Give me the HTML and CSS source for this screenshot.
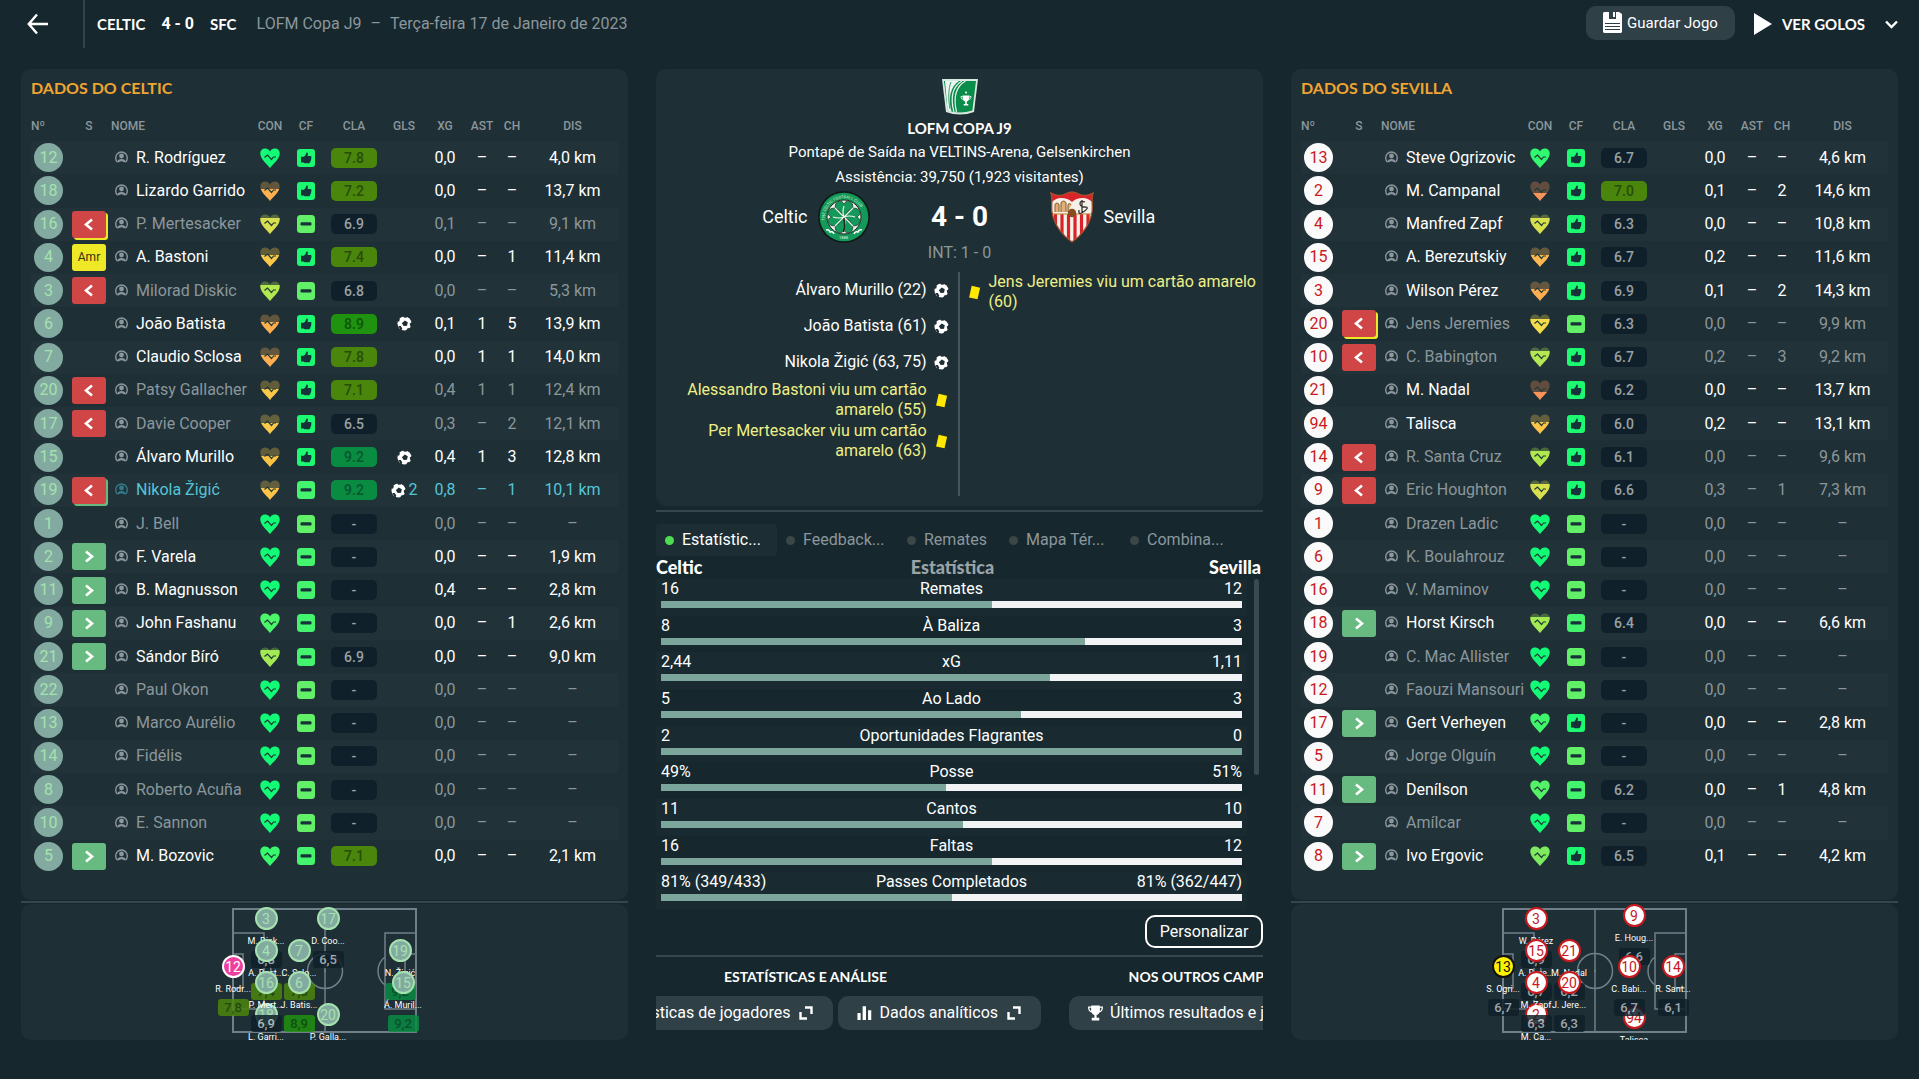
FILE: index.html
```html
<!DOCTYPE html>
<html lang="pt">
<head>
    <meta charset="UTF-8">
    <meta name="viewport" content="width=device-width, initial-scale=1.0">
    <title>Celtic 4 - 0 Sevilla</title>
    <link rel="stylesheet" href="styles.css">
</head>
<body>
    <svg class="sprite" aria-hidden="true">
        <symbol id="i-person" viewBox="0 0 13 14">
            <path d="M2.500 12A5.800 5.800 0 1 1 10.500 12" fill="none" stroke="currentColor" stroke-width="1.400"/>
            <circle cx="6.500" cy="6" r="2.400" fill="currentColor"/>
            <path d="M2.200 12.500C2.500 10 4 9 6.500 9s4 1 4.300 3.500L8.500 12c-.8-1-3.200-1-4 0z" fill="currentColor"/>
        </symbol>
        <symbol id="i-heart" viewBox="0 0 20 20">
            <path d="M10 20C8 16.500.3 11.500.3 5.200.3 2 2.500.4 5 .4c2.300 0 4 1.200 5 3.200 1-2 2.700-3.200 5-3.200 2.500 0 4.700 1.600 4.700 4.800C19.700 11.500 12 16.500 10 20z"/>
        </symbol>
        <symbol id="i-up" viewBox="0 0 18 18">
            <rect width="18" height="18" rx="3" fill="currentColor"/>
            <path d="M9.800 3.300c1.400.3 1.200 1.800.8 3.700h2.600c1.500 0 1.600 1.500.9 2 .5.600.3 1.400-.3 1.800.3.7 0 1.300-.6 1.600.2 1.200-.7 1.800-1.700 1.800H8.500c-1 0-1.500-.3-2-.7H4V7.800h2.800c1.600-1 2.200-2.600 3-4.500z" fill="#17323a"/>
        </symbol>
        <symbol id="i-flat" viewBox="0 0 18 18">
            <rect width="18" height="18" rx="3.500" fill="currentColor"/>
            <rect x="3.500" y="7.300" width="11" height="3.200" rx="1.200" fill="#17323a"/>
        </symbol>
        <symbol id="i-ball" viewBox="0 0 16 16">
            <circle cx="8" cy="8" r="7.500" fill="#fff"/>
            <path d="M8.300 4.700l3.200 2-.8 3.600-3.600.4-1.900-3zM0 5.600l2.200.6.8-2.500L2.200 1.800zM6.500 0l1 1.800 3-.1L12 0zM16 6.500l-2.400 1.600.6 3 1.800-.2zM10 16l.6-2.400 2.800-1 .8 1.800zM1.500 10.700l2.600 0 1.600 3-1.500 2z" fill="#1e2f35"/>
        </symbol>
        <symbol id="i-card" viewBox="0 0 14 16">
            <path d="M4 .8l9 2-2.800 12.500-9-2z" fill="#ffe900"/>
        </symbol>
        <symbol id="i-open" viewBox="0 0 14 14">
            <path d="M6 1.500h6.500V8M8 12.500H1.500V6" fill="none" stroke="currentColor" stroke-width="2.400"/>
        </symbol>
        <symbol id="i-bars" viewBox="0 0 16 16">
            <path d="M.5 8h3.400v7.500H.5zM6 .8h3.600v14.700H6zM11.800 5h3.400v10.500h-3.400z" fill="currentColor"/>
        </symbol>
        <symbol id="i-cup" viewBox="0 0 14 14">
            <path d="M3 0h8v1h3c0 3.500-1 5-3.300 5.500C10 7.800 9 8.500 8 8.800V11.500h2.500V14h-7v-2.500H6V8.800C5 8.500 4 7.800 3.300 6.500 1 6 0 4.500 0 1h3zM1.300 2.200C1.400 4 1.900 4.800 2.900 5.100V2.200zM12.700 2.200H11.100v2.900c1-.3 1.500-1.100 1.600-2.900z" fill="currentColor"/>
        </symbol>
        <symbol id="i-pitch" viewBox="0 0 185 125">
            <g fill="none" stroke="#70808a" stroke-width="2">
                <rect x="1" y="1" width="183" height="123"/>
                <path d="M1 25h31v76H1M1 46h10v34H1M184 25h-31v76h31M184 46h-11v34h11M93 1v123" stroke-width="1.500"/>
                <circle cx="93" cy="63" r="17.500" stroke-width="1.500"/>
                <path d="M153 49a17.500 17.500 0 0 0 0 28M32 49a17.500 17.500 0 0 1 0 28" stroke-width="1.500"/>
            </g>
            <circle cx="93" cy="63" r="1" fill="#70808a"/>
        </symbol>
    </svg>

    <header class="topbar">
        <button class="back" aria-label="Voltar">
            <svg width="22" height="22" viewBox="0 0 22 22"><path d="M21 11H2M10 1.500L1.800 11l8.200 9.500" fill="none" stroke="#fff" stroke-width="2.400"/></svg>
        </button>
        <div class="topbar-score">
            <b>CELTIC</b><b class="num">4 - 0</b><b>SFC</b>
        </div>
        <div class="topbar-info"><span>LOFM Copa J9</span><span>–</span><span>Terça-feira 17 de Janeiro de 2023</span></div>
        <button class="button save">
            <svg width="19" height="21" viewBox="0 0 19 21"><path d="M1 0h5v7h7V0h3l3 2v18l-1 1H1l-1-1V1z" fill="#fff"/><path d="M10 0h2v5h-2z" fill="#fff"/><path d="M2 11.500h15M2 14.500h15M2 17.500h15" stroke="#2d3f46" stroke-width="1.200"/></svg>
            Guardar Jogo
        </button>
        <button class="goals">
            <svg width="18" height="22" viewBox="0 0 18 22"><path d="M0 0l18 11L0 22z" fill="#fff"/></svg>
            <b>VER GOLOS</b>
            <svg width="13" height="9" viewBox="0 0 13 9"><path d="M1 1.500l5.500 5.500L12 1.500" fill="none" stroke="#fff" stroke-width="2.400"/></svg>
        </button>
    </header>

    <main class="columns">
        <section class="team" id="celtic"></section>

        <section class="match">
            <div class="panel summary">
                <svg class="badge" width="36" height="36" viewBox="0 0 36 36">
                    <path d="M0 0h36l-4 33q-14 5-28 0z" fill="#d9e8e0"/>
                    <path d="M2 2h32l-3.600 29.500q-12.400 4-24.800 0z" fill="#0a8c4a"/>
                    <path d="M3 2h14C8 8 6 20 9.500 32.500l-4-1z" fill="#eef6f1"/>
                    <path d="M20 2C10 8 8.500 20 12 33M23.500 2C13 8 11.500 20 14.500 33" fill="none" stroke="#eef6f1" stroke-width="1.200"/>
                    <path d="M9 3C6.500 9 6 20 8 30" fill="none" stroke="#0a8c4a" stroke-width=".8"/>
                    <path d="M20.500 16.500h7c0 4-1 5.500-2.700 6V25h1.500v1.500h-4.600V25h1.500v-2.500c-1.700-.5-2.700-2-2.700-6z" fill="#fff"/>
                    <path d="M20.500 17.500h-1.500c0 2 .8 3 2.300 3M27.500 17.500H29c0 2-.8 3-2.300 3" fill="none" stroke="#fff" stroke-width=".8"/>
                    <circle cx="24" cy="13.500" r="1" fill="#fff"/>
                </svg>
                <h1>LOFM COPA J9</h1>
                <p>Pontapé de Saída na VELTINS-Arena, Gelsenkirchen</p>
                <p>Assistência: 39,750 (1,923 visitantes)</p>
                <div class="scoreline">
                    <div class="side home">
                        <span>Celtic</span>
                        <svg width="52" height="52" viewBox="0 0 52 52">
                            <defs>
                                <path id="arc" d="M7.500 32A19.300 19.300 0 1 1 44.500 32"/>
                            </defs>
                            <circle cx="26" cy="26" r="26" fill="#101a1a"/>
                            <circle cx="26" cy="26" r="24.300" fill="#139a5a"/>
                            <circle cx="26" cy="26" r="17" fill="#f3f5ec" stroke="#222" stroke-width="1"/>
                            <text class="crest-text"><textPath href="#arc" startOffset="3">THE CELTIC FOOTBALL CLUB</textPath></text>
                            <text class="crest-text" x="21" y="48">1888</text>
                            <path d="M8 39q3-1 4 2 3-1 4 2M44 39q-3-1-4 2-3-1-4 2" fill="none" stroke="#fff" stroke-width="1.500"/>
                            <g fill="#139a5a" stroke="#16352a" stroke-width=".8">
                                <path id="leaf" d="M26 25.500C17 22 15 14 19.500 11c3-1.800 5.500-.2 6.500 2.200 1-2.400 3.500-4 6.500-2.200C37 14 35 22 26 25.500z"/>
                                <use href="#leaf" transform="rotate(90 26 26)"/>
                                <use href="#leaf" transform="rotate(180 26 26)"/>
                                <use href="#leaf" transform="rotate(270 26 26)"/>
                            </g>
                            <path d="M26 26q-2-5 0-11M26 26q2 5 0 11M26 26q5-2 11 0M26 26q-5 2-11 0M26 26l9-9M26 26l-9 9M26 26l-9-9M26 26l9 9" fill="none" stroke="#f3f5ec" stroke-width="1.100"/>
                            <path d="M26 27q1.500 7-.5 14" fill="none" stroke="#222" stroke-width="1.500"/>
                        </svg>
                    </div>
                    <strong>4 - 0</strong>
                    <div class="side">
                        <svg width="44" height="52" viewBox="0 0 44 52">
                            <defs>
                                <clipPath id="shield"><path d="M1 2q7 4 13 1.500Q19 1 22 1t8 2.500Q36 6 43 2c-2 6 0 12-1 19-2 13-11 24-20 30C13 45 4 34 2 21 1 14 3 8 1 2z"/></clipPath>
                            </defs>
                            <g clip-path="url(#shield)">
                                <rect width="44" height="52" fill="#f6f1e8"/>
                                <path d="M0 0h44v13q-5-6-11-6-7 0-11 4Q18 7 11 7 5 7 0 13z" fill="#d8232a"/>
                                <path d="M5.500 23v29M12 23v29M18.500 23v29M25 23v29M31.500 23v29M38 23v29" stroke="#d8232a" stroke-width="3.200"/>
                                <path d="M0 23h44" stroke="#b9842c" stroke-width="1.200"/>
                                <path d="M5 21v-7q2-4 4 0v7M11 21v-9q2.500-4 5 0v9M18 21v-7q1.500-3 3 0" fill="#e0b078" stroke="#9a6a3a" stroke-width="1.200"/>
                                <path d="M35 11q-5-2-5 1.500t5 3.500-1 4.500-5-1.500M32 9v13" fill="none" stroke="#333" stroke-width="1.300"/>
                                <circle cx="22" cy="22" r="4.200" fill="#8a4a22"/>
                            </g>
                            <path d="M1 2q7 4 13 1.500Q19 1 22 1t8 2.500Q36 6 43 2c-2 6 0 12-1 19-2 13-11 24-20 30C13 45 4 34 2 21 1 14 3 8 1 2z" fill="none" stroke="#a5502a" stroke-width="1.300"/>
                        </svg>
                        <span>Sevilla</span>
                    </div>
                </div>
                <div class="halftime">INT: 1 - 0</div>
                <div class="events">
                    <ul class="home">
                        <li><span>Álvaro Murillo (22)</span><svg><use href="#i-ball"/></svg></li>
                        <li><span>João Batista (61)</span><svg><use href="#i-ball"/></svg></li>
                        <li><span>Nikola Žigić (63, 75)</span><svg><use href="#i-ball"/></svg></li>
                        <li class="booked"><span>Alessandro Bastoni viu um cartão amarelo (55)</span><svg><use href="#i-card"/></svg></li>
                        <li class="booked"><span>Per Mertesacker viu um cartão amarelo (63)</span><svg><use href="#i-card"/></svg></li>
                    </ul>
                    <ul>
                        <li class="booked"><svg><use href="#i-card"/></svg><span>Jens Jeremies viu um cartão amarelo (60)</span></li>
                    </ul>
                </div>
            </div>
            <div class="rule"></div>

            <nav class="tabs">
                <button class="active">Estatístic...</button>
                <button>Feedback...</button>
                <button>Remates</button>
                <button>Mapa Tér...</button>
                <button>Combina...</button>
            </nav>
            <div class="stats-head"><b>Celtic</b><b>Estatística</b><b>Sevilla</b></div>
            <div class="stats-view">
                <div class="stats" id="stats"></div>
                <div class="scroll-thumb"></div>
            </div>
            <button class="customise">Personalizar</button>
            <div class="rule"></div>

            <div class="shortcuts" id="shortcuts">
                <div class="group">
                    <h2>ESTATÍSTICAS E ANÁLISE</h2>
                    <div class="group-buttons">
                        <button class="button"><svg><use href="#i-bars"/></svg>Estatísticas de jogadores<svg><use href="#i-open"/></svg></button>
                        <button class="button"><svg><use href="#i-bars"/></svg>Dados analíticos<svg><use href="#i-open"/></svg></button>
                    </div>
                </div>
                <div class="group">
                    <h2>NOS OUTROS CAMPOS</h2>
                    <div class="group-buttons">
                        <button class="button"><svg><use href="#i-cup"/></svg>Últimos resultados e jogos<svg><use href="#i-open"/></svg></button>
                    </div>
                </div>
            </div>
        </section>

        <section class="team" id="sevilla"></section>
    </main>

    <script src="script.js"></script>
</body>
</html>
```

FILE: styles.css
```css
* {
    box-sizing: border-box;
}

body {
    display: flex;
    flex-direction: column;
    height: 100vh;
    margin: 0;
    padding-bottom: 39px;
    background-color: #16272d;
    color: #fff;
    font: 16px/20px Roboto, sans-serif;
    overflow: hidden;
}

h1, h2, p, ul {
    margin: 0;
    padding: 0;
}

button {
    background: none;
    border: none;
    padding: 0;
    color: inherit;
    font: inherit;
    white-space: nowrap;
    cursor: pointer;
}

.sprite {
    display: none;
}

/* top bar */

.topbar {
    display: flex;
    align-items: center;
    flex: none;
    height: 48px;
    padding: 0 21px 0 0;
}

.back {
    width: 85px;
    height: 48px;
    padding: 0 0 0 27px;
    border-right: 2px solid #33444b;
    text-align: left;
}

.back svg,
.goals svg,
.save svg {
    display: block;
}

.topbar-score {
    display: flex;
    gap: 16px;
    margin-left: 12px;
    font-family: Lato, sans-serif;
}

.topbar-score b,
.goals b {
    font-size: 15px;
    font-weight: 700;
}

.topbar-score .num {
    font-family: Roboto, sans-serif;
    font-size: 16px;
}

.topbar-info {
    display: flex;
    gap: 9px;
    margin-left: 20px;
    color: #8b979c;
}

.button {
    display: flex;
    align-items: center;
    height: 34px;
    padding: 0 19px;
    border-radius: 10px;
    background: #2f4047;
}

.save {
    gap: 5px;
    margin: -3px 19px 0 auto;
    padding: 0 17px;
    font-size: 15px;
}

.goals {
    display: flex;
    align-items: center;
    gap: 10px;
    font-family: Lato, sans-serif;
}

.goals b {
    margin-right: 10px;
}

/* layout */

.columns {
    flex: 1;
    display: grid;
    grid-template-columns: repeat(3, minmax(0, 1fr));
    gap: 28px;
    min-height: 0;
    margin-top: 21px;
    padding: 0 21px;
}

.team,
.match {
    display: flex;
    flex-direction: column;
    min-height: 0;
}

.panel {
    background: #1e2f35;
    border-radius: 10px;
}

.rule {
    flex: none;
    height: 2px;
    background: #35464d;
}

/* player tables */

.squad {
    display: flex;
    flex-direction: column;
    flex: 1;
    min-height: 0;
    padding: 9px 10px 27px;
}

.squad h2 {
    margin-bottom: 12px;
    color: #f0a431;
    font: 700 16px/20px Lato, sans-serif;
}

.squad-table {
    flex: 1;
    min-height: 0;
}

table {
    width: 100%;
    height: 100%;
    border-collapse: collapse;
    table-layout: fixed;
}

th {
    height: 31px;
    padding: 0;
    color: #8b979c;
    font-size: 12px;
    font-weight: 500;
}

td {
    padding: 0;
    text-align: center;
    white-space: nowrap;
}

tbody tr:nth-child(odd) {
    background: #213239;
}

.c-no { width: 36px; }
.c-s { width: 44px; }
.c-con { width: 38px; }
.c-cf { width: 34px; }
.c-cla { width: 62px; }
.c-gls { width: 38px; }
.c-xg { width: 44px; }
.c-ast, .c-ch { width: 30px; }
.c-dis { width: 91px; }

th.c-no,
th.c-name {
    text-align: left;
}

td.c-name {
    padding-left: 4px;
    text-align: left;
}

.unused {
    color: #8b979c;
}

.mine {
    color: #55c5d6;
}

td svg {
    display: block;
    margin: 0 auto;
}

.person {
    display: inline-block;
    width: 13px;
    height: 14px;
    margin: 0 8px 0 0;
    color: #8b979c;
    vertical-align: -1px;
}

.mine .person {
    color: #347a88;
}

.shirt {
    display: flex;
    align-items: center;
    justify-content: center;
    width: 29px;
    height: 29px;
    margin-left: 3px;
    border-radius: 50%;
}

.shirt.celtic {
    background: #82aaa1;
    color: #a5e2ad;
}

.shirt.sevilla {
    background: #fafafa;
    color: #c8191f;
}

.sub {
    display: flex;
    align-items: center;
    justify-content: center;
    width: 34px;
    height: 27px;
    margin: 0 auto;
    border-radius: 3px;
    font-size: 12px;
}

.sub.off { background: #d04545; }
.sub.on { background: #68bb80; }
.sub.amr { background: #efe827; color: #33330c; }
.sub.off-amr { background: #d04545; box-shadow: 2px 2px 0 #efe827; }
.sub.off-goal { background: #d04545; box-shadow: 2px 2px 0 #68bb80; }

.rating {
    display: block;
    width: 46px;
    height: 20px;
    margin: 0 auto;
    border-radius: 5px;
    background: #10202a;
    color: #98a1a5;
    font-size: 14px;
    font-weight: 500;
}

.goal {
    display: flex;
    align-items: center;
    justify-content: center;
    gap: 3px;
}

.goal svg {
    width: 15px;
    height: 15px;
    margin: 0;
}

/* formation */

.team .rule {
    margin: 1px 0;
}

.formation {
    display: flex;
    justify-content: center;
    flex: none;
    height: 136px;
    padding-top: 4px;
    overflow: hidden;
}

.pitch {
    position: relative;
    width: 185px;
    height: 125px;
}

.pitch > svg {
    display: block;
    width: 185px;
    height: 125px;
}

.node {
    position: absolute;
    display: flex;
    flex-direction: column;
    align-items: center;
    width: 32px;
    margin: -12px 0 0 -16px;
}

.disc {
    display: flex;
    align-items: center;
    justify-content: center;
    width: 23px;
    height: 23px;
    border: 2px solid #a5e2ad;
    border-radius: 50%;
    background: #82aaa1;
    color: #a5e2ad;
    font-size: 14px;
}

.sevilla .disc {
    border-color: #c8191f;
    background: #fff;
    color: #c8191f;
}

.celtic .keeper {
    border-color: #fff;
    background: #ee3fa0;
    color: #fff;
}

.sevilla .keeper {
    border-color: #111;
    background: #fff000;
    color: #111;
}

.node .name {
    margin-top: 3px;
    font-size: 9px;
    line-height: 16px;
    white-space: nowrap;
}

.mark {
    width: 31px;
    height: 17px;
    margin-top: 2px;
    border-radius: 3px;
    background: #10202a;
    color: #b4bcc0;
    font-size: 13px;
    font-weight: 500;
    line-height: 17px;
    text-align: center;
    opacity: .85;
}

.good { background: #4a850c; color: #274d09; }
.great { background: #1f920f; color: #0d560a; }
.top { background: #0a8b42; color: #05572c; }

/* match summary */

.summary {
    display: flex;
    flex-direction: column;
    align-items: center;
    height: 437px;
    padding-top: 10px;
}

.badge {
    flex: none;
}

.summary h1 {
    margin: 3px 0 2px;
    font: 700 15px/20px Lato, sans-serif;
}

.summary p {
    font-size: 15px;
    line-height: 25px;
}

.scoreline {
    display: grid;
    grid-template-columns: 1fr 180px 1fr;
    align-items: center;
    width: 100%;
    height: 54px;
    text-align: center;
}

.side {
    display: flex;
    align-items: center;
    gap: 10px;
    font-size: 18px;
}

.side.home {
    justify-content: flex-end;
}

.crest-text {
    fill: #d7f0dd;
    font: 4px Roboto, sans-serif;
}

.scoreline strong {
    font-size: 28px;
    font-weight: 700;
    line-height: 32px;
}

.halftime {
    height: 28px;
    color: #8b979c;
    line-height: 18px;
}

.events {
    display: grid;
    grid-template-columns: 1fr 1fr;
    width: 100%;
    height: 224px;
}

.events ul {
    list-style: none;
}

.events ul.home {
    border-right: 2px solid #46565d;
    text-align: right;
}

.events li {
    display: flex;
    align-items: center;
    gap: 7px;
    min-height: 36px;
    padding: 0 0 0 7px;
}

.events .home li {
    justify-content: flex-end;
    padding: 0 9px 0 20px;
}

.events .booked {
    margin-bottom: 1px;
    color: #eff087;
}

.events svg {
    flex: none;
    width: 15px;
    height: 15px;
}

.match .rule {
    margin-top: 4px;
}

/* stats */

.tabs {
    display: flex;
    height: 32px;
    margin-top: 12px;
}

.tabs button {
    padding: 0 13px 0 9px;
    border-radius: 4px;
    color: #8b979c;
}

.tabs button:not(:nth-child(3)) {
    width: 121px;
    text-align: left;
}

.tabs button::before {
    content: "";
    display: inline-block;
    width: 9px;
    height: 9px;
    margin-right: 8px;
    border-radius: 50%;
    background: #3b4646;
}

.tabs .active {
    background: #1c2d33;
    color: #fff;
}

.tabs .active::before {
    background: #4fdc55;
}

.stats-head {
    display: grid;
    grid-template-columns: 1fr auto 1fr;
    height: 23px;
    padding-right: 2px;
    font: 18px/22px Lato, sans-serif;
}

.stats-head b {
    font-weight: 900;
}

.stats-head b:nth-child(2) {
    padding-right: 12px;
    color: #9aa3a6;
}

.stats-head b:last-child {
    text-align: right;
}

.stats-view {
    display: flex;
    justify-content: space-between;
    height: 330px;
    margin-bottom: 1px;
    overflow: hidden;
}

.stats {
    display: grid;
    grid-auto-rows: calc(100% / 9);
    flex: 1;
    margin-right: 7px;
}

.stat {
    padding: 0 5px;
}

.stat:nth-child(odd) {
    background: #192b31;
}

.stat-text {
    display: grid;
    grid-template-columns: 1fr auto 1fr;
    margin-bottom: 2px;
}

.stat-text span:last-child {
    text-align: right;
}

.stat-bar {
    height: 7px;
    background: #f1f3f4;
}

.stat-bar div {
    height: 7px;
    background: #7ca59c;
}

.scroll-thumb {
    width: 5px;
    height: 196px;
    margin-right: 4px;
    border-radius: 3px;
    background: #3a4a51;
}

.customise {
    align-self: flex-end;
    flex: none;
    width: 118px;
    height: 33px;
    margin: 5px 0 3px;
    border: 2px solid #fff;
    border-radius: 10px;
}

.shortcuts {
    display: flex;
    gap: 28px;
    padding-top: 10px;
    overflow: hidden;
}

.group {
    flex: none;
}

.group h2 {
    margin-bottom: 9px;
    font: 700 14px/20px Lato, sans-serif;
    text-align: center;
}

.group-buttons {
    display: flex;
    gap: 5px;
}

.group .button svg {
    width: 15px;
    height: 16px;
    margin-right: 7px;
}

.group .button svg:last-child {
    width: 14px;
    height: 14px;
    margin: 0 1px 0 9px;
}
```

FILE: script.js
```javascript
const GREEN = '#12fa76';

// no, sub, name, heart colour, heart drained (0-20), form, rating, goals, xg, ast, ch, dis, class
const celtic = [
    [12, '', 'R. Rodríguez', GREEN, 0, 'up', '7.8', 0, '0,0', '-', '-', '4,0 km', ''],
    [18, '', 'Lizardo Garrido', '#ffb04f', 8, 'up', '7.2', 0, '0,0', '-', '-', '13,7 km', ''],
    [16, 'off-amr', 'P. Mertesacker', '#d9e04f', 4, 'flat', '6.9', 0, '0,1', '-', '-', '9,1 km', 'unused'],
    [4, 'amr', 'A. Bastoni', '#fbc94a', 8, 'up', '7.4', 0, '0,0', '-', '1', '11,4 km', ''],
    [3, 'off', 'Milorad Diskic', '#b2e84f', 4, 'flat', '6.8', 0, '0,0', '-', '-', '5,3 km', 'unused'],
    [6, '', 'João Batista', '#ffae50', 8, 'up', '8.9', 1, '0,1', '1', '5', '13,9 km', ''],
    [7, '', 'Claudio Sclosa', '#ffae50', 8, 'up', '7.8', 0, '0,0', '1', '1', '14,0 km', ''],
    [20, 'off', 'Patsy Gallacher', '#fbc94a', 9, 'up', '7.1', 0, '0,4', '1', '1', '12,4 km', 'unused'],
    [17, 'off', 'Davie Cooper', '#fbc94a', 9, 'up', '6.5', 0, '0,3', '-', '2', '12,1 km', 'unused'],
    [15, '', 'Álvaro Murillo', '#fbc345', 9, 'up', '9.2', 1, '0,4', '1', '3', '12,8 km', ''],
    [19, 'off-goal', 'Nikola Žigić', '#fcc54a', 8, 'flat', '9.2', 2, '0,8', '-', '1', '10,1 km', 'mine'],
    [1, '', 'J. Bell', GREEN, 0, 'flat', '-', 0, '0,0', '-', '-', '-', 'unused'],
    [2, 'on', 'F. Varela', GREEN, 0, 'flat', '-', 0, '0,0', '-', '-', '1,9 km', ''],
    [11, 'on', 'B. Magnusson', GREEN, 0, 'flat', '-', 0, '0,4', '-', '-', '2,8 km', ''],
    [9, 'on', 'John Fashanu', '#4df56b', 0, 'flat', '-', 0, '0,0', '-', '1', '2,6 km', ''],
    [21, 'on', 'Sándor Bíró', '#a3ea55', 3, 'flat', '6.9', 0, '0,0', '-', '-', '9,0 km', ''],
    [22, '', 'Paul Okon', GREEN, 0, 'flat', '-', 0, '0,0', '-', '-', '-', 'unused'],
    [13, '', 'Marco Aurélio', GREEN, 0, 'flat', '-', 0, '0,0', '-', '-', '-', 'unused'],
    [14, '', 'Fidélis', GREEN, 0, 'flat', '-', 0, '0,0', '-', '-', '-', 'unused'],
    [8, '', 'Roberto Acuña', GREEN, 0, 'flat', '-', 0, '0,0', '-', '-', '-', 'unused'],
    [10, '', 'E. Sannon', GREEN, 0, 'flat', '-', 0, '0,0', '-', '-', '-', 'unused'],
    [5, 'on', 'M. Bozovic', '#38f86e', 0, 'flat', '7.1', 0, '0,0', '-', '-', '2,1 km', '']
];

const sevilla = [
    [13, '', 'Steve Ogrizovic', '#30f870', 0, 'up', '6.7', 0, '0,0', '-', '-', '4,6 km', ''],
    [2, '', 'M. Campanal', '#f8935a', 12, 'up', '7.0', 0, '0,1', '-', '2', '14,6 km', ''],
    [4, '', 'Manfred Zapf', '#d9e04f', 4, 'up', '6.3', 0, '0,0', '-', '-', '10,8 km', ''],
    [15, '', 'A. Berezutskiy', '#ffb850', 8, 'up', '6.7', 0, '0,2', '-', '-', '11,6 km', ''],
    [3, '', 'Wilson Pérez', '#ffae50', 8, 'up', '6.9', 0, '0,1', '-', '2', '14,3 km', ''],
    [20, 'off-amr', 'Jens Jeremies', '#f5dc4c', 5, 'flat', '6.3', 0, '0,0', '-', '-', '9,9 km', 'unused'],
    [10, 'off', 'C. Babington', '#b5e653', 4, 'up', '6.7', 0, '0,2', '-', '3', '9,2 km', 'unused'],
    [21, '', 'M. Nadal', '#f8935a', 12, 'up', '6.2', 0, '0,0', '-', '-', '13,7 km', ''],
    [94, '', 'Talisca', '#fcc54a', 8, 'up', '6.0', 0, '0,2', '-', '-', '13,1 km', ''],
    [14, 'off', 'R. Santa Cruz', '#b2e84f', 4, 'up', '6.1', 0, '0,0', '-', '-', '9,6 km', 'unused'],
    [9, 'off', 'Eric Houghton', '#d9e04f', 4, 'up', '6.6', 0, '0,3', '-', '1', '7,3 km', 'unused'],
    [1, '', 'Drazen Ladic', GREEN, 0, 'flat', '-', 0, '0,0', '-', '-', '-', 'unused'],
    [6, '', 'K. Boulahrouz', GREEN, 0, 'flat', '-', 0, '0,0', '-', '-', '-', 'unused'],
    [16, '', 'V. Maminov', GREEN, 0, 'flat', '-', 0, '0,0', '-', '-', '-', 'unused'],
    [18, 'on', 'Horst Kirsch', '#a3ea55', 4, 'flat', '6.4', 0, '0,0', '-', '-', '6,6 km', ''],
    [19, '', 'C. Mac Allister', GREEN, 0, 'flat', '-', 0, '0,0', '-', '-', '-', 'unused'],
    [12, '', 'Faouzi Mansouri', GREEN, 0, 'flat', '-', 0, '0,0', '-', '-', '-', 'unused'],
    [17, 'on', 'Gert Verheyen', '#40f56c', 0, 'up', '-', 0, '0,0', '-', '-', '2,8 km', ''],
    [5, '', 'Jorge Olguín', GREEN, 0, 'flat', '-', 0, '0,0', '-', '-', '-', 'unused'],
    [11, 'on', 'Denílson', '#55f268', 0, 'flat', '6.2', 0, '0,0', '-', '1', '4,8 km', ''],
    [7, '', 'Amílcar', GREEN, 0, 'flat', '-', 0, '0,0', '-', '-', '-', 'unused'],
    [8, 'on', 'Ivo Ergovic', '#7eea60', 0, 'up', '6.5', 0, '0,1', '-', '-', '4,2 km', '']
];

// no, name, rating, x, y - drawn in this order, later ones on top
const celticShape = [
    [18, 'L. Garri...', '7,2', 34, 107],
    [3, 'M. Disk...', '6,8', 34, 11],
    [4, 'A. Bast...', '7,4', 34, 43],
    [16, 'P. Mert...', '6,9', 34, 75],
    [7, 'C. Sclo...', '7,8', 67, 43],
    [6, 'J. Batis...', '8,9', 67, 75],
    [17, 'D. Coo...', '6,5', 96, 11],
    [20, 'P. Galla...', '7,1', 96, 107],
    [19, 'N. Žigić', '9,2', 168, 43],
    [15, 'Á. Muril...', '9,2', 171, 75],
    [12, 'R. Rodr...', '7,8', 1, 59]
];

const sevillaShape = [
    [2, 'M. Ca...', '7,0', 34, 107],
    [3, 'W. Pérez', '6,9', 34, 11],
    [15, 'A. Bere...', '6,7', 34, 43],
    [4, 'M. Zapf', '6,3', 34, 75],
    [21, 'M. Nadal', '6,2', 67, 43],
    [20, 'J. Jere...', '6,3', 67, 75],
    [94, 'Talisca', '6,0', 132, 110],
    [9, 'E. Houg...', '6,6', 132, 8],
    [10, 'C. Babi...', '6,7', 127, 59],
    [14, 'R. Sant...', '6,1', 171, 59],
    [13, 'S. Ogri...', '6,7', 1, 59]
];

// home value, label, away value, home share in %
const stats = [
    ['16', 'Remates', '12', 57],
    ['8', 'À Baliza', '3', 73],
    ['2,44', 'xG', '1,11', 67],
    ['5', 'Ao Lado', '3', 62],
    ['2', 'Oportunidades Flagrantes', '0', 100],
    ['49%', 'Posse', '51%', 49],
    ['11', 'Cantos', '10', 52],
    ['16', 'Faltas', '12', 57],
    ['81% (349/433)', 'Passes Completados', '81% (362/447)', 50]
];

function ratingClass(rating) {
    const value = parseFloat(rating.replace(',', '.'));
    if (value >= 9) return 'top';
    if (value >= 8) return 'great';
    if (value >= 7) return 'good';
    return '';
}

function heart(color, drained) {
    const left = 20 - drained;
    return `<svg width="20" height="20" viewBox="0 0 20 20" fill="${color}">
        <use href="#i-heart" width="20" height="20" opacity=".3"/>
        <svg y="${drained}" width="20" height="${left}" viewBox="0 ${drained} 20 ${left}"><use href="#i-heart" width="20" height="20"/></svg>
        <path d="M4.500 9.500l3-2.500 4 4.500 2-2.500 2.500 0" fill="none" stroke="#1e3a34" stroke-width="1.200"/>
    </svg>`;
}

function sub(type) {
    if (!type) return '';
    if (type === 'amr') return '<span class="sub amr">Amr</span>';
    const path = type === 'on' ? 'M2 1.500l6 5-6 5' : 'M8 1.500l-6 5 6 5';
    return `<span class="sub ${type}"><svg width="10" height="13" viewBox="0 0 10 13"><path d="${path}" fill="none" stroke="#fff" stroke-width="2.600"/></svg></span>`;
}

function goals(count) {
    if (!count) return '';
    return `<span class="goal"><svg><use href="#i-ball"/></svg>${count > 1 ? count : ''}</span>`;
}

function formColor(form, cls) {
    if (form === 'up') return '#1cfa72';
    return cls === 'unused' ? '#62f068' : '#45f46e';
}

function playerRow(p, team) {
    const [no, s, name, color, drained, form, rating, gls, xg, ast, ch, dis, cls] = p;
    return `<tr class="${cls}">
        <td><span class="shirt ${team}">${no}</span></td>
        <td>${sub(s)}</td>
        <td class="c-name"><svg class="person"><use href="#i-person"/></svg>${name}</td>
        <td>${heart(color, drained)}</td>
        <td><svg width="18" height="18" color="${formColor(form, cls)}"><use href="#i-${form}"/></svg></td>
        <td><span class="rating ${ratingClass(rating)}">${rating}</span></td>
        <td>${goals(gls)}</td>
        <td>${xg}</td>
        <td>${ast.replace('-', '–')}</td>
        <td>${ch.replace('-', '–')}</td>
        <td>${dis.replace('-', '–')}</td>
    </tr>`;
}

function node(p, keeper) {
    const [no, name, rating, x, y] = p;
    return `<div class="node" style="left: ${x}px; top: ${y}px">
        <span class="disc ${no === keeper ? 'keeper' : ''}">${no}</span>
        <span class="name">${name}</span>
        <span class="mark ${ratingClass(rating)}">${rating}</span>
    </div>`;
}

function renderTeam(team, title, players, shape, keeper) {
    document.getElementById(team).innerHTML = `
        <div class="panel squad">
            <h2>${title}</h2>
            <div class="squad-table">
                <table>
                    <thead>
                        <tr>
                            <th class="c-no">Nº</th><th class="c-s">S</th><th class="c-name">NOME</th>
                            <th class="c-con">CON</th><th class="c-cf">CF</th><th class="c-cla">CLA</th>
                            <th class="c-gls">GLS</th><th class="c-xg">XG</th><th class="c-ast">AST</th>
                            <th class="c-ch">CH</th><th class="c-dis">DIS</th>
                        </tr>
                    </thead>
                    <tbody>${players.map(p => playerRow(p, team)).join('')}</tbody>
                </table>
            </div>
        </div>
        <div class="rule"></div>
        <div class="panel formation">
            <div class="pitch ${team}">
                <svg><use href="#i-pitch"/></svg>
                ${shape.map(p => node(p, keeper)).join('')}
            </div>
        </div>`;
}

renderTeam('celtic', 'DADOS DO CELTIC', celtic, celticShape, 12);
renderTeam('sevilla', 'DADOS DO SEVILLA', sevilla, sevillaShape, 13);

document.getElementById('stats').innerHTML = stats.map(s => `
    <div class="stat">
        <div class="stat-text"><span>${s[0]}</span><span>${s[1]}</span><span>${s[2]}</span></div>
        <div class="stat-bar"><div style="width: ${s[3]}%"></div></div>
    </div>`).join('');

document.getElementById('shortcuts').scrollLeft = 86;
```
